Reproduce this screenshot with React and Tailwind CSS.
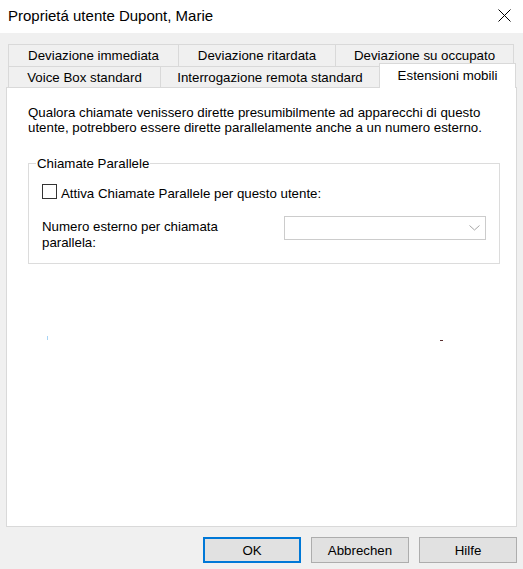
export default function App() {
  const font = { fontFamily: '"Liberation Sans", Arial, sans-serif' };
  return (
    <div
      className="w-[523px] h-[569px] bg-[#f0f0f0] flex flex-col text-[13.3px] text-black overflow-hidden"
      style={font}
    >
      {/* window title bar */}
      <div className="h-[33px] bg-white flex items-center justify-between pl-[8px] pr-[12px] shrink-0">
        <span className="text-[15px] leading-[18px] mt-[-1px]">Proprietá utente Dupont, Marie</span>
        <svg width="13" height="13" viewBox="0 0 13 13" className="mt-[-2px]">
          <path d="M0.5 0.5 L12.5 12.5 M12.5 0.5 L0.5 12.5" stroke="#000" strokeWidth="1" fill="none" />
        </svg>
      </div>

      {/* tab strip */}
      <div className="pt-[11px] pl-[8px] shrink-0">
        <div className="flex h-[22px]">
          <div className="w-[171px] border-t border-l border-r border-[#d9d9d9] flex items-center justify-center leading-[15px]">
            Deviazione immediata
          </div>
          <div className="w-[157px] border-t border-r border-[#d9d9d9] flex items-center justify-center leading-[15px]">
            Deviazione ritardata
          </div>
          <div className="w-[178px] border-t border-r border-[#d9d9d9] flex items-center justify-center leading-[15px]">
            Deviazione su occupato
          </div>
        </div>
        <div className="flex items-start h-[21px]">
          <div className="w-[153px] h-[21px] border-t border-l border-r border-[#d9d9d9] flex items-center justify-center leading-[15px]">
            Voice Box standard
          </div>
          <div className="w-[219px] h-[21px] border-t border-r border-[#d9d9d9] flex items-center justify-center leading-[15px]">
            Interrogazione remota standard
          </div>
          <div className="relative z-10 w-[137px] h-[25px] -mt-[3px] -ml-px bg-white border-t border-l border-r border-[#d9d9d9] flex justify-center pt-[4px] leading-[15px]">
            Estensioni mobili
          </div>
        </div>
      </div>

      {/* tab page */}
      <div className="relative flex-1 mx-[6px] bg-white border border-[#d9d9d9] pl-[21px] pt-[17px]">
        <p className="leading-[15px] w-[470px]">
          Qualora chiamate venissero dirette presumibilmente ad apparecchi di questo utente, potrebbero essere dirette parallelamente anche a un numero esterno.
        </p>

        <fieldset className="mt-[21px] w-[472px] border border-[#dcdcdc] pl-[13px] pb-[12px]">
          <legend className="-ml-[6px] px-[1px] leading-[15px]">Chiamate Parallele</legend>
          <div className="flex items-start pt-[13px]">
            <div className="w-[15px] h-[15px] border border-[#333333] bg-white shrink-0" />
            <span className="ml-[4px] mt-[2px] leading-[15px]">Attiva Chiamate Parallele per questo utente:</span>
          </div>
          <div className="flex items-start mt-[15px]">
            <div className="w-[242px] shrink-0 pt-[3px] leading-[16px] pr-[50px]">
              Numero esterno per chiamata parallela:
            </div>
            <div className="w-[202px] h-[24px] border border-[#cccccc] bg-white flex items-center justify-end pr-[5px]">
              <svg width="11" height="6" viewBox="0 0 11 6">
                <path d="M0.5 0.5 L5.5 5 L10.5 0.5" stroke="#a6a6a6" strokeWidth="1" fill="none" />
              </svg>
            </div>
          </div>
        </fieldset>

        {/* stray specks on the page surface */}
        <span className="absolute left-[40px] top-[248px] w-px h-[4px] bg-[#a8d4f5]" />
        <span className="absolute left-[433px] top-[252px] w-[3px] h-px bg-[#5a3030]" />
      </div>

      {/* dialog buttons */}
      <div className="flex justify-end gap-[10px] pt-[10px] pb-[6px] pr-[6px] shrink-0">
        <button className="w-[98px] h-[26px] bg-[#e1e1e1] border-2 border-[#0078d7] leading-[15px]">OK</button>
        <button className="w-[98px] h-[26px] bg-[#e1e1e1] border border-[#adadad] leading-[15px]">Abbrechen</button>
        <button className="w-[98px] h-[26px] bg-[#e1e1e1] border border-[#adadad] leading-[15px]">Hilfe</button>
      </div>
    </div>
  );
}
